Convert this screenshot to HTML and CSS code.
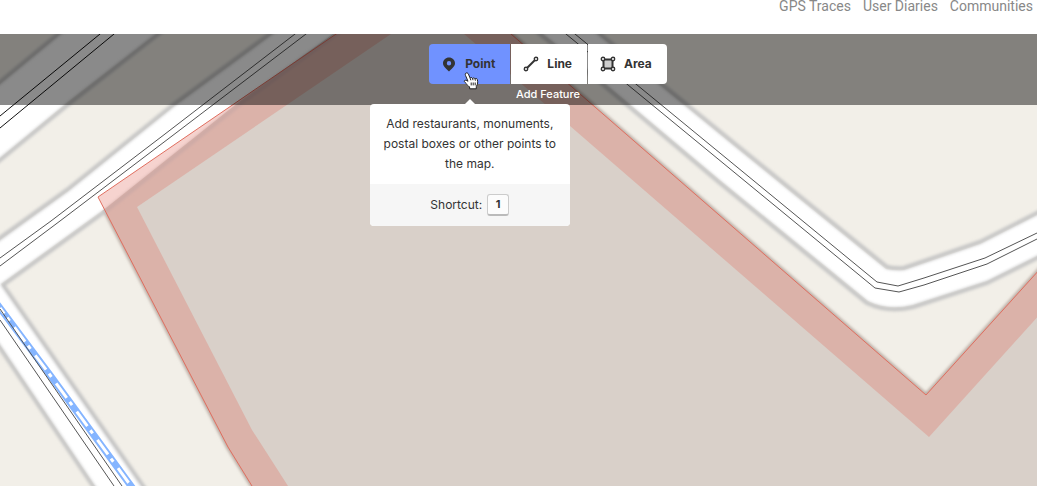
FILE: index.html
```
<!DOCTYPE html>
<html lang="en">
<head>
  <meta charset="UTF-8">
  <meta name="viewport" content="width=device-width, initial-scale=1.0">
  <title>Map Editor</title>
  <link rel="stylesheet" href="styles.css">
</head>
<body>
  <header>
    <nav>
      <a href="#traces">GPS Traces</a>
      <a href="#diaries">User Diaries</a>
      <a href="#communities">Communities</a>
    </nav>
  </header>

  <main>
    <svg class="map" viewBox="0 34 1037 452" preserveAspectRatio="xMinYMin slice" aria-hidden="true">
      <defs>
        <filter id="soft" x="-5%" y="-5%" width="110%" height="110%">
          <feGaussianBlur stdDeviation="1.6"/>
        </filter>
      </defs>

      <!-- land area -->
      <g class="land">
        <path class="land-edge" filter="url(#soft)" d="M98 197L434 -33L511 34L926 395L1050 258V520H273L252 486L228 447Z"/>
        <path class="land-fill" d="M98 197L434 -33L511 34L926 395L1050 258V520H273L252 486L228 447Z"/>
      </g>

      <!-- road surfaces -->
      <g class="road">
        <path d="M-20 100L0 84L59 35L82 16H180L155 35L69 101L0 158L-20 174Z"/>
        <path d="M-20 254L0 240L67 192L173 107L267 38L292 19H350L333 34L239 102L106 208L1 284L142 486L156 506H109L95 486L0 345L-20 318Z"/>
        <path d="M574 14L598 34L738 149L886 269Q896 271 904 270L980 244L1037 215L1057 205V246L1037 256L987 281L913 305Q888 311 868 301L721 181L602 81L543 34L518 14Z"/>
      </g>
      <!-- road casings -->
      <g class="casing" filter="url(#soft)">
        <path d="M-20 98L0 82L57 35L80 16"/>
        <path d="M-20 176L0 160L70 103L157 35L180 17"/>
        <path d="M-20 252L0 238L67 190L173 105L267 36L290 19"/>
        <path d="M350 24L334 36L240 104L107 210L3 285L143 486L157 506"/>
        <path d="M-20 320L0 348L93 486L107 506"/>
        <path d="M576 14L600 34L740 148L887 267Q896 269 904 268L980 242L1037 213L1057 203"/>
        <path d="M516 14L540 34L600 82L720 183L867 303Q888 313 913 307L987 283L1037 258L1057 248"/>
      </g>

      <!-- railways -->
      <g class="rail dark">
        <path d="M-13 126L0 116L100 34L112 24"/>
        <path d="M-13 138L0 128L114 34L126 24"/>
      </g>
      <g class="rail">
        <path d="M-10 266L0 258L51 221L165 134L295 34L308 24"/>
        <path d="M-10 273L0 266L60 221L172 136L306 34L319 24"/>
        <path d="M562 24L575 34L877 282L898 286L924 278L985 258L1037 233L1050 227"/>
        <path d="M554 24L566 34L875 288L899 292L924 285L987 264L1037 239L1050 233"/>
        <path d="M0 320L114 486L124 500"/>
      </g>
      <path class="path-line" d="M-3 304L0 308L50 375L131 486L142 501"/>
      <path class="path-dash" d="M0 308L50 375L131 486L142 501"/>
      <path class="rail" d="M0 309L122 486L132 500"/>

      <!-- area outline -->
      <path class="area-band" d="M98 197L434 -33L511 34L926 395L1050 258V303L929 437L464 34L432 6L391 34L137 207L252 430L288 486L310 520H273L252 486L228 447Z"/>
      <path class="area-line" d="M273 520L252 486L228 447L98 197L434 -33L511 34L926 395L1050 258"/>
    </svg>

    <div class="topbar">
      <div class="modes">
        <div class="mode-item">
          <button class="mode active" aria-describedby="point-tip">
            <svg class="icon" viewBox="0 0 16 16">
              <path fill="#333" fill-rule="evenodd" d="M8 1.5C4.7 1.5 2 4 2 7.2C2 10.5 5.4 12.7 8 15.5C10.6 12.7 14 10.5 14 7.2C14 4 11.3 1.5 8 1.5ZM8 5A2.2 2.2 0 1 1 8 9.4A2.2 2.2 0 1 1 8 5Z"/>
            </svg>
            Point
          </button>
          <svg class="cursor" viewBox="0 0 16 18" aria-hidden="true">
            <path fill="#fff" stroke="#222" stroke-linejoin="round" d="M3.2 1C2.1 1.3 2.1 2.5 2.5 3.4L5 9.3C3.9 8.3 2.2 7.7 1.4 8.7C.8 9.6 2.2 10.4 3.1 11.4C4.2 12.8 5 14.4 6.6 14.8V16.8H13.3V14.5C14.8 12.3 15 9.9 14.3 7.5C13.9 6.1 12.3 6.1 12.1 7.1C11.8 5.6 10 5.4 9.6 6.7C9 5.1 7.6 5.2 7.2 6.2L5.4 2.1C4.9 1.1 4.1.7 3.2 1Z"/>
            <path fill="none" stroke="#222" d="M7.2 6.2L7.8 8.3M9.6 6.6L10 8.2M12.1 7.1L12.4 8.7M8.2 10.5V13.4M10.2 10.5V13.4M12.2 10.5V13.4"/>
          </svg>
          <div class="tooltip" id="point-tip" role="tooltip">
            <p class="tooltip-text">Add restaurants, monuments, postal boxes or other points to the map.</p>
            <p class="tooltip-keys">Shortcut: <kbd>1</kbd></p>
          </div>
        </div>
        <button class="mode">
          <svg class="icon" viewBox="0 0 16 16">
            <path stroke="#333" stroke-width="2" d="M4 12L12 4"/>
            <circle cx="3" cy="13" r="1.7" fill="#fff" stroke="#333" stroke-width="1.4"/>
            <circle cx="13" cy="3" r="1.7" fill="#fff" stroke="#333" stroke-width="1.4"/>
          </svg>
          Line
        </button>
        <button class="mode">
          <svg class="icon" viewBox="0 0 16 16">
            <path fill="#ccc" stroke="#333" stroke-width="2" d="M3.5 3.5H12.5V12.5H3.5Z"/>
            <g fill="#fff" stroke="#333" stroke-width="1.4">
              <circle cx="3" cy="3" r="1.7"/>
              <circle cx="13" cy="3" r="1.7"/>
              <circle cx="3" cy="13" r="1.7"/>
              <circle cx="13" cy="13" r="1.7"/>
            </g>
          </svg>
          Area
        </button>
      </div>
      <span class="label">Add Feature</span>
    </div>
  </main>
</body>
</html>
```
FILE: styles.css
```
* {
  box-sizing: border-box;
}

body {
  margin: 0;
  height: 100vh;
  display: flex;
  flex-direction: column;
  overflow: hidden;
  font-family: Inter, "Liberation Sans", sans-serif;
  font-size: 12px;
  color: #333;
  background: #fff;
}

header {
  height: 34px;
  padding: 0 4px;
}

nav {
  display: flex;
  justify-content: flex-end;
  gap: 12px;
}

nav a {
  color: #888;
  font-family: Roboto, sans-serif;
  font-size: 14px;
  line-height: 12px;
  text-decoration: none;
}

main {
  position: relative;
  flex: 1;
  min-height: 0;
  background: #f2efe8;
}

/* Map */
.map {
  position: absolute;
  inset: 0;
  width: 100%;
  height: 100%;
}

.land-fill {
  fill: #d9d0c9;
}

.land-edge {
  fill: none;
  stroke: #b8aaa2;
  stroke-width: 4;
}

.casing {
  fill: none;
  stroke: #c4c4c4;
  stroke-width: 4;
}

.road {
  fill: #fff;
}

.rail {
  fill: none;
  stroke: #555;
  stroke-width: 1;
}

.rail.dark {
  stroke: #111;
}

.path-line {
  fill: none;
  stroke: #85b5ff;
  stroke-width: 7;
}

.path-dash {
  fill: none;
  stroke: #fff;
  stroke-width: 3;
  stroke-dasharray: 4 8 18 5;
  stroke-dashoffset: 23;
}

.area-band {
  fill: #e06e5f;
  fill-opacity: 0.3;
}

.area-line {
  fill: none;
  stroke: #e06e5f;
  stroke-width: 1;
}

/* Toolbar */
.topbar {
  position: relative;
  display: flex;
  flex-direction: column;
  align-items: center;
  padding: 10px 0 1px 59px;
  background: rgba(0, 0, 0, 0.46);
}

.modes {
  display: flex;
  gap: 1px;
}

.mode-item {
  position: relative;
}

.mode {
  display: flex;
  align-items: center;
  gap: 8px;
  height: 40px;
  padding: 0 15px 1px 12px;
  border: none;
  background: #fff;
  color: #333;
  font-family: inherit;
  font-size: 12px;
  font-weight: bold;
  cursor: pointer;
}

.mode.active {
  border-radius: 4px 0 0 4px;
  background: #7092ff;
}

.mode:last-child {
  border-radius: 0 4px 4px 0;
}

.icon {
  width: 16px;
  height: 16px;
  fill: none;
}

.label {
  color: #fff;
  font-size: 11px;
  font-weight: 500;
  line-height: 20px;
}

.cursor {
  position: absolute;
  left: 34px;
  top: 28px;
  width: 16px;
  height: 18px;
}

/* Tooltip */
.tooltip {
  position: absolute;
  top: 60px;
  left: 50%;
  width: 200px;
  margin-left: -100px;
  border-radius: 4px;
  background: #fff;
  line-height: 20px;
  text-align: center;
}

.tooltip::before {
  content: "";
  position: absolute;
  top: -5px;
  left: 95px;
  border: 5px solid transparent;
  border-top: none;
  border-bottom-color: #fff;
}

.tooltip p {
  margin: 0;
  padding: 10px;
}

.tooltip .tooltip-keys {
  display: flex;
  align-items: center;
  justify-content: center;
  gap: 5px;
  border-radius: 0 0 4px 4px;
  background: #f6f6f6;
}

kbd {
  min-width: 22px;
  padding: 0 7px;
  border: 1px solid #ccc;
  border-bottom: 2px solid #bbb;
  border-radius: 3px;
  background: #fcfcfc;
  font-family: inherit;
  font-size: 11px;
  font-weight: bold;
  line-height: 19px;
}
```
